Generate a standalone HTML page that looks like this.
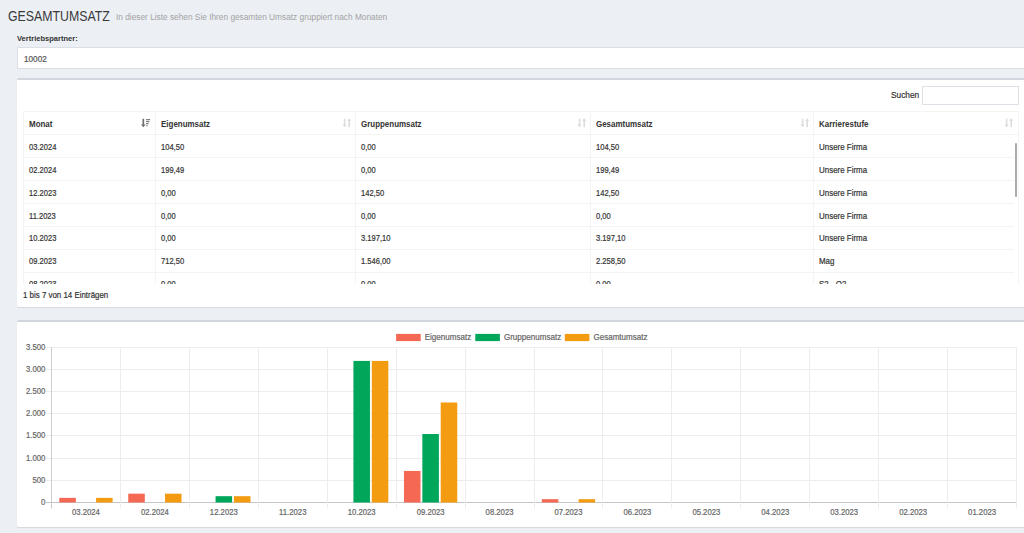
<!DOCTYPE html>
<html><head><meta charset="utf-8"><title>Gesamtumsatz</title>
<style>
html,body{margin:0;padding:0;}
body{width:1024px;height:533px;overflow:hidden;background:#ecf0f5;font-family:'Liberation Sans', sans-serif;color:#333;position:relative;}
.a{position:absolute;white-space:nowrap;}
.s{transform-origin:0 0;}
.box{position:absolute;left:17px;width:1007px;background:#fff;border-top:2px solid #d2d6de;border-radius:2px 0 0 2px;box-shadow:0 1px 1px rgba(0,0,0,0.1);}
.t{font-size:8.6px;line-height:10px;color:#333;-webkit-text-stroke:0.2px #333;transform:scaleX(0.88);transform-origin:0 0;}
.tw{transform:scaleX(0.925);}
.th{font-size:8.4px;line-height:10px;font-weight:bold;color:#333;transform:scaleX(0.95);transform-origin:0 0;}
.bl{position:absolute;background:#f4f4f4;}
.ct{font-family:'Liberation Sans';font-size:8.4px;fill:#666;stroke:#666;stroke-width:0.2px;}
</style></head><body>

<div class="a s" style="left:7.6px;top:8.5px;font-size:14.4px;line-height:14px;color:#3a3a3a;transform:scaleX(0.857);">GESAMTUMSATZ</div>
<div class="a" style="left:116px;top:12.3px;font-size:8.3px;line-height:10px;color:#a2a2a2;">In dieser Liste sehen Sie Ihren gesamten Umsatz gruppiert nach Monaten</div>
<div class="a s" style="left:16.6px;top:33.8px;font-size:8.1px;line-height:10px;font-weight:bold;color:#333;transform:scaleX(0.93);">Vertriebspartner:</div>
<div class="a" style="left:17px;top:47px;width:1007px;height:20px;background:#fff;border:1px solid #dce0e6;border-right:none;box-sizing:content-box;"></div>
<div class="a t" style="left:24px;top:53.5px;font-size:8.8px;color:#555;-webkit-text-stroke:0.2px #555;transform:scaleX(0.93);">10002</div>
<div class="box" style="top:78px;height:227px;"></div>
<div class="a t" style="left:891px;top:89.65px;font-size:8.8px;transform:scaleX(0.947);">Suchen</div>
<div class="a" style="left:922px;top:86px;width:95px;height:17px;border:1px solid #dde1e7;background:#fff;"></div>
<div class="bl" style="left:23px;top:111px;width:996px;height:1px;"></div>
<div class="bl" style="left:23px;top:134px;width:996px;height:1px;"></div>
<div class="bl" style="left:23px;top:111px;width:1px;height:173px;"></div>
<div class="bl" style="left:155px;top:111px;width:1px;height:173px;"></div>
<div class="bl" style="left:355px;top:111px;width:1px;height:173px;"></div>
<div class="bl" style="left:590px;top:111px;width:1px;height:173px;"></div>
<div class="bl" style="left:813px;top:111px;width:1px;height:173px;"></div>
<div class="bl" style="left:1018px;top:111px;width:1px;height:173px;"></div>
<div class="a th" style="left:29px;top:118.7px;">Monat</div>
<div class="a th" style="left:161px;top:118.7px;">Eigenumsatz</div>
<div class="a th" style="left:361px;top:118.7px;">Gruppenumsatz</div>
<div class="a th" style="left:596px;top:118.7px;">Gesamtumsatz</div>
<div class="a th" style="left:819px;top:118.7px;">Karrierestufe</div>
<svg class="a" style="left:141.4px;top:118px" width="10" height="10" viewBox="0 0 10 10"><path d="M2.3 0.8v7.2" stroke="#707070" stroke-width="1.7"/><path d="M-0.1 6.5l2.4 2.8l2.4-2.8z" fill="#707070"/><path d="M5.1 1.6h4.1M5.1 3.6h3.3M5.1 5.6h2.5M5.1 7.7h1.7" stroke="#808080" stroke-width="1.1"/></svg>
<svg class="a" style="left:341.7px;top:118px" width="10" height="10" viewBox="0 0 10 10"><path d="M2.6 0.6v7.4" stroke="#ddd" stroke-width="1.6"/><path d="M0.4 6.6l2.2 2.6l2.2-2.6z" fill="#ddd"/><path d="M7.2 9.2v-7.4" stroke="#ddd" stroke-width="1.6"/><path d="M5 2.8l2.2-2.6l2.2 2.6z" fill="#ddd"/></svg>
<svg class="a" style="left:576.5px;top:118px" width="10" height="10" viewBox="0 0 10 10"><path d="M2.6 0.6v7.4" stroke="#ddd" stroke-width="1.6"/><path d="M0.4 6.6l2.2 2.6l2.2-2.6z" fill="#ddd"/><path d="M7.2 9.2v-7.4" stroke="#ddd" stroke-width="1.6"/><path d="M5 2.8l2.2-2.6l2.2 2.6z" fill="#ddd"/></svg>
<svg class="a" style="left:799.5px;top:118px" width="10" height="10" viewBox="0 0 10 10"><path d="M2.6 0.6v7.4" stroke="#ddd" stroke-width="1.6"/><path d="M0.4 6.6l2.2 2.6l2.2-2.6z" fill="#ddd"/><path d="M7.2 9.2v-7.4" stroke="#ddd" stroke-width="1.6"/><path d="M5 2.8l2.2-2.6l2.2 2.6z" fill="#ddd"/></svg>
<svg class="a" style="left:1003.5px;top:118px" width="10" height="10" viewBox="0 0 10 10"><path d="M2.6 0.6v7.4" stroke="#ddd" stroke-width="1.6"/><path d="M0.4 6.6l2.2 2.6l2.2-2.6z" fill="#ddd"/><path d="M7.2 9.2v-7.4" stroke="#ddd" stroke-width="1.6"/><path d="M5 2.8l2.2-2.6l2.2 2.6z" fill="#ddd"/></svg>
<div class="a" style="left:23px;top:135px;width:996px;height:149px;overflow:hidden;">
<div class="bl" style="left:0;top:22px;width:991px;height:1px;"></div>
<div class="a t" style="left:5.6px;top:6.8px;">03.2024</div>
<div class="a t" style="left:137.6px;top:6.8px;">104,50</div>
<div class="a t" style="left:337.6px;top:6.8px;">0,00</div>
<div class="a t" style="left:572.6px;top:6.8px;">104,50</div>
<div class="a t tw" style="left:795.6px;top:6.8px;">Unsere Firma</div>
<div class="bl" style="left:0;top:45px;width:991px;height:1px;"></div>
<div class="a t" style="left:5.6px;top:29.7px;">02.2024</div>
<div class="a t" style="left:137.6px;top:29.7px;">199,49</div>
<div class="a t" style="left:337.6px;top:29.7px;">0,00</div>
<div class="a t" style="left:572.6px;top:29.7px;">199,49</div>
<div class="a t tw" style="left:795.6px;top:29.7px;">Unsere Firma</div>
<div class="bl" style="left:0;top:68px;width:991px;height:1px;"></div>
<div class="a t" style="left:5.6px;top:52.6px;">12.2023</div>
<div class="a t" style="left:137.6px;top:52.6px;">0,00</div>
<div class="a t" style="left:337.6px;top:52.6px;">142,50</div>
<div class="a t" style="left:572.6px;top:52.6px;">142,50</div>
<div class="a t tw" style="left:795.6px;top:52.6px;">Unsere Firma</div>
<div class="bl" style="left:0;top:91px;width:991px;height:1px;"></div>
<div class="a t" style="left:5.6px;top:75.5px;">11.2023</div>
<div class="a t" style="left:137.6px;top:75.5px;">0,00</div>
<div class="a t" style="left:337.6px;top:75.5px;">0,00</div>
<div class="a t" style="left:572.6px;top:75.5px;">0,00</div>
<div class="a t tw" style="left:795.6px;top:75.5px;">Unsere Firma</div>
<div class="bl" style="left:0;top:114px;width:991px;height:1px;"></div>
<div class="a t" style="left:5.6px;top:98.4px;">10.2023</div>
<div class="a t" style="left:137.6px;top:98.4px;">0,00</div>
<div class="a t" style="left:337.6px;top:98.4px;">3.197,10</div>
<div class="a t" style="left:572.6px;top:98.4px;">3.197,10</div>
<div class="a t tw" style="left:795.6px;top:98.4px;">Unsere Firma</div>
<div class="bl" style="left:0;top:137px;width:991px;height:1px;"></div>
<div class="a t" style="left:5.6px;top:121.3px;">09.2023</div>
<div class="a t" style="left:137.6px;top:121.3px;">712,50</div>
<div class="a t" style="left:337.6px;top:121.3px;">1.546,00</div>
<div class="a t" style="left:572.6px;top:121.3px;">2.258,50</div>
<div class="a t tw" style="left:795.6px;top:121.3px;">Mag</div>
<div class="bl" style="left:0;top:160px;width:991px;height:1px;"></div>
<div class="a t" style="left:5.6px;top:144.2px;">08.2023</div>
<div class="a t" style="left:137.6px;top:144.2px;">0,00</div>
<div class="a t" style="left:337.6px;top:144.2px;">0,00</div>
<div class="a t" style="left:572.6px;top:144.2px;">0,00</div>
<div class="a t tw" style="left:795.6px;top:144.2px;">S2 - Q2</div>
</div>
<div class="a" style="left:1015px;top:143px;width:2px;height:54px;background:#aaa;border-radius:1px;"></div>
<div class="a t" style="left:23px;top:290px;transform:scaleX(0.92);">1 bis 7 von 14 Einträgen</div>
<div class="box" style="top:320px;height:205px;"></div>
<svg class="a" style="left:0;top:0" width="1024" height="533" viewBox="0 0 1024 533"><line x1="45.6" y1="502.50" x2="1016.5" y2="502.50" stroke="#c6c6c6" stroke-width="1"/><line x1="45.6" y1="480.50" x2="1016.5" y2="480.50" stroke="#ededed" stroke-width="1"/><line x1="45.6" y1="458.50" x2="1016.5" y2="458.50" stroke="#ededed" stroke-width="1"/><line x1="45.6" y1="435.50" x2="1016.5" y2="435.50" stroke="#ededed" stroke-width="1"/><line x1="45.6" y1="413.50" x2="1016.5" y2="413.50" stroke="#ededed" stroke-width="1"/><line x1="45.6" y1="391.50" x2="1016.5" y2="391.50" stroke="#ededed" stroke-width="1"/><line x1="45.6" y1="369.50" x2="1016.5" y2="369.50" stroke="#ededed" stroke-width="1"/><line x1="45.6" y1="347.50" x2="1016.5" y2="347.50" stroke="#ededed" stroke-width="1"/><line x1="51.50" y1="347" x2="51.50" y2="508.6" stroke="#cdcdcd" stroke-width="1"/><line x1="120.50" y1="347" x2="120.50" y2="508.6" stroke="#ededed" stroke-width="1"/><line x1="189.50" y1="347" x2="189.50" y2="508.6" stroke="#ededed" stroke-width="1"/><line x1="258.50" y1="347" x2="258.50" y2="508.6" stroke="#ededed" stroke-width="1"/><line x1="327.50" y1="347" x2="327.50" y2="508.6" stroke="#ededed" stroke-width="1"/><line x1="396.50" y1="347" x2="396.50" y2="508.6" stroke="#ededed" stroke-width="1"/><line x1="465.50" y1="347" x2="465.50" y2="508.6" stroke="#ededed" stroke-width="1"/><line x1="534.50" y1="347" x2="534.50" y2="508.6" stroke="#ededed" stroke-width="1"/><line x1="602.50" y1="347" x2="602.50" y2="508.6" stroke="#ededed" stroke-width="1"/><line x1="671.50" y1="347" x2="671.50" y2="508.6" stroke="#ededed" stroke-width="1"/><line x1="740.50" y1="347" x2="740.50" y2="508.6" stroke="#ededed" stroke-width="1"/><line x1="809.50" y1="347" x2="809.50" y2="508.6" stroke="#ededed" stroke-width="1"/><line x1="878.50" y1="347" x2="878.50" y2="508.6" stroke="#ededed" stroke-width="1"/><line x1="947.50" y1="347" x2="947.50" y2="508.6" stroke="#ededed" stroke-width="1"/><line x1="1016.50" y1="347" x2="1016.50" y2="508.6" stroke="#ededed" stroke-width="1"/><text class="ct" transform="translate(45.3 504.80) scale(0.92 1)" text-anchor="end">0</text><text class="ct" transform="translate(45.3 482.80) scale(0.92 1)" text-anchor="end">500</text><text class="ct" transform="translate(45.3 460.80) scale(0.92 1)" text-anchor="end">1.000</text><text class="ct" transform="translate(45.3 437.80) scale(0.92 1)" text-anchor="end">1.500</text><text class="ct" transform="translate(45.3 415.80) scale(0.92 1)" text-anchor="end">2.000</text><text class="ct" transform="translate(45.3 393.80) scale(0.92 1)" text-anchor="end">2.500</text><text class="ct" transform="translate(45.3 371.80) scale(0.92 1)" text-anchor="end">3.000</text><text class="ct" transform="translate(45.3 349.80) scale(0.92 1)" text-anchor="end">3.500</text><text class="ct" transform="translate(85.97 514.9) scale(0.92 1)" text-anchor="middle">03.2024</text><text class="ct" transform="translate(154.90 514.9) scale(0.92 1)" text-anchor="middle">02.2024</text><text class="ct" transform="translate(223.83 514.9) scale(0.92 1)" text-anchor="middle">12.2023</text><text class="ct" transform="translate(292.75 514.9) scale(0.92 1)" text-anchor="middle">11.2023</text><text class="ct" transform="translate(361.69 514.9) scale(0.92 1)" text-anchor="middle">10.2023</text><text class="ct" transform="translate(430.62 514.9) scale(0.92 1)" text-anchor="middle">09.2023</text><text class="ct" transform="translate(499.55 514.9) scale(0.92 1)" text-anchor="middle">08.2023</text><text class="ct" transform="translate(568.48 514.9) scale(0.92 1)" text-anchor="middle">07.2023</text><text class="ct" transform="translate(637.41 514.9) scale(0.92 1)" text-anchor="middle">06.2023</text><text class="ct" transform="translate(706.34 514.9) scale(0.92 1)" text-anchor="middle">05.2023</text><text class="ct" transform="translate(775.27 514.9) scale(0.92 1)" text-anchor="middle">04.2023</text><text class="ct" transform="translate(844.20 514.9) scale(0.92 1)" text-anchor="middle">03.2023</text><text class="ct" transform="translate(913.13 514.9) scale(0.92 1)" text-anchor="middle">02.2023</text><text class="ct" transform="translate(982.06 514.9) scale(0.92 1)" text-anchor="middle">01.2023</text><rect x="59.31" y="497.87" width="16.54" height="4.63" fill="#f56954"/><rect x="96.07" y="497.87" width="16.54" height="4.63" fill="#f39c12"/><rect x="128.24" y="493.67" width="16.54" height="8.83" fill="#f56954"/><rect x="165.00" y="493.67" width="16.54" height="8.83" fill="#f39c12"/><rect x="215.55" y="496.19" width="16.54" height="6.31" fill="#00a65a"/><rect x="233.93" y="496.19" width="16.54" height="6.31" fill="#f39c12"/><rect x="353.41" y="360.91" width="16.54" height="141.59" fill="#00a65a"/><rect x="371.79" y="360.91" width="16.54" height="141.59" fill="#f39c12"/><rect x="403.96" y="470.95" width="16.54" height="31.55" fill="#f56954"/><rect x="422.34" y="434.03" width="16.54" height="68.47" fill="#00a65a"/><rect x="440.72" y="402.48" width="16.54" height="100.02" fill="#f39c12"/><rect x="541.82" y="499.18" width="16.54" height="3.32" fill="#f56954"/><rect x="578.58" y="499.18" width="16.54" height="3.32" fill="#f39c12"/><rect x="396.1" y="333.9" width="24.6" height="7.2" fill="#f56954"/><text class="ct" transform="translate(424.70 339.9) scale(0.96 1)">Eigenumsatz</text><rect x="475.3" y="333.9" width="24.6" height="7.2" fill="#00a65a"/><text class="ct" transform="translate(503.90 339.9) scale(0.96 1)">Gruppenumsatz</text><rect x="564.8" y="333.9" width="24.6" height="7.2" fill="#f39c12"/><text class="ct" transform="translate(593.40 339.9) scale(0.96 1)">Gesamtumsatz</text></svg>
</body></html>
